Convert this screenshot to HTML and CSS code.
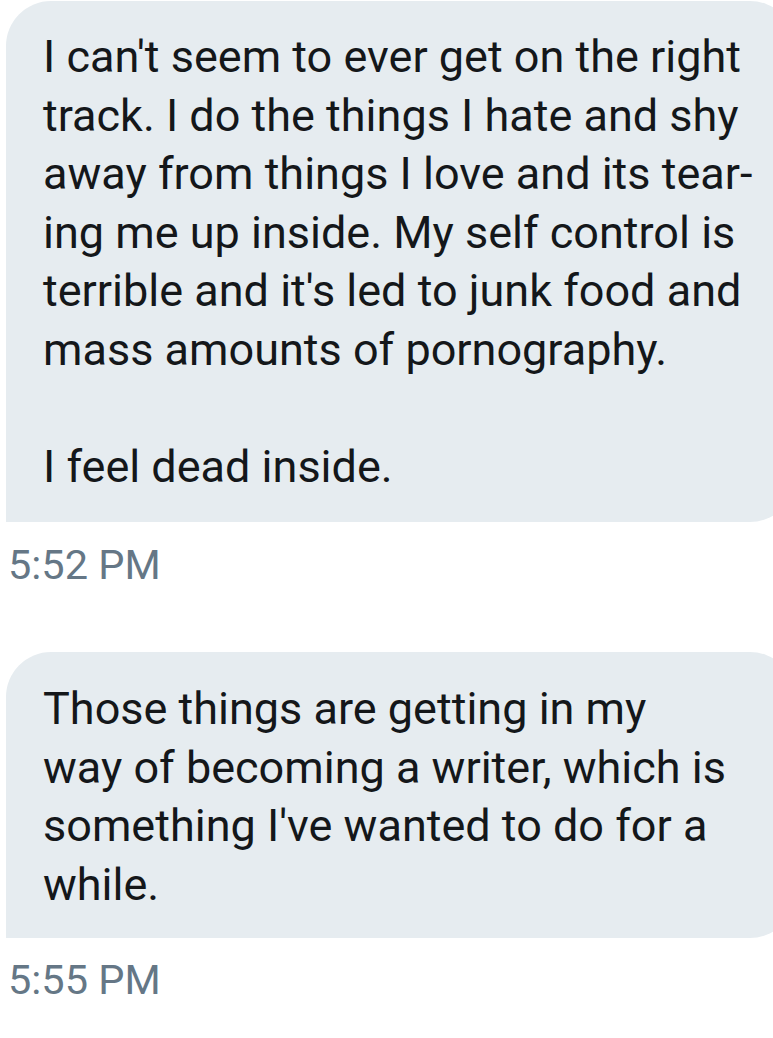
FILE: index.html
```html
<!DOCTYPE html>
<html>
<head>
<meta charset="utf-8">
<link rel="stylesheet" href="styles.css">
</head>
<body>
<div class="thread">
  <div class="msg first">
    <div class="bubble b1">I can't seem to ever get on the right<br>track. I do the things I hate and shy<br>away from things I love and its tear-<br>ing me up inside. My self control is<br>terrible and it's led to junk food and<br>mass amounts of pornography.<br><br>I feel dead inside.</div>
    <div class="time t1">5:52 PM</div>
  </div>
  <div class="msg second">
    <div class="bubble b2">Those things are getting in my<br>way of becoming a writer, which is<br>something I've wanted to do for a<br>while.</div>
    <div class="time t2">5:55 PM</div>
  </div>
</div>
</body>
</html>
```

FILE: styles.css
```css
html, body {
  margin: 0;
  padding: 0;
  background: #ffffff;
  overflow: hidden;
}
.thread {
  width: 773px;
  height: 1038px;
  padding-top: 1px;
  box-sizing: border-box;
  font-family: Roboto, "Noto Sans", sans-serif;
}
.msg {
  display: flex;
  flex-direction: column;
  align-items: flex-start;
}
.second {
  margin-top: 63px;
}
.bubble {
  margin-left: 6px;
  width: 789px;
  box-sizing: border-box;
  background: #e6ecf0;
  color: #14171a;
  font-size: 45px;
  line-height: 58.5px;
  padding-left: 37px;
  border-radius: 45px 45px 45px 0;
  white-space: nowrap;
}
.b1 {
  padding-top: 27px;
  padding-bottom: 26px;
}
.b2 {
  padding-top: 28px;
  padding-bottom: 24px;
}
.time {
  margin-left: 8px;
  margin-top: 19px;
  color: #657786;
  font-size: 41.5px;
  line-height: 48px;
}
.t2 {
  margin-top: 18px;
}
```
